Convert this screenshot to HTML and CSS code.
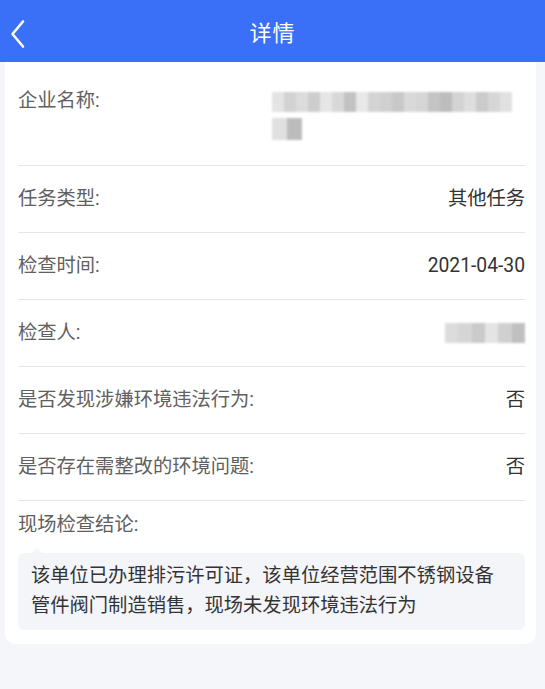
FILE: index.html
```html
<!DOCTYPE html>
<html lang="zh-CN">
<head>
<meta charset="utf-8">
<title>详情</title>
<link rel="stylesheet" href="styles.css">
</head>
<body>
<header class="topbar">
  <svg class="back" width="20" height="32" viewBox="0 0 20 32"><path d="M15 3.5 L4.5 16 L15 28.5" fill="none" stroke="#fff" stroke-width="2.6" stroke-linecap="round" stroke-linejoin="round"/></svg>
  <h1 class="title">详情</h1>
</header>
<main class="card">
  <div class="row row-top">
    <span class="label">企业名称:</span>
    <div class="mosaic-wrap">
      <div class="mosaic m1">
        <i style="background:#e4e4e4"></i><i style="background:#d2d2d2"></i><i style="background:#dcdcdc"></i><i style="background:#cdcdcd"></i><i style="background:#e6e6e6"></i><i style="background:#d8d8d8"></i><i style="background:#c2c2c2"></i><i style="background:#e8e8e8"></i><i style="background:#d4d4d4"></i><i style="background:#d0d0d0"></i><i style="background:#c8c8c8"></i><i style="background:#d9d9d9"></i><i style="background:#d6d6d6"></i><i style="background:#c4c4c4"></i><i style="background:#bdbdbd"></i><i style="background:#d3d3d3"></i><i style="background:#dedede"></i><i style="background:#cbcbcb"></i><i style="background:#d7d7d7"></i><i style="background:#e1e1e1"></i>
      </div>
      <div class="mosaic m2"><i style="background:#e0e0e0"></i><i style="background:#bcbcbc"></i></div>
    </div>
  </div>
  <div class="row">
    <span class="label">任务类型:</span>
    <span class="value">其他任务</span>
  </div>
  <div class="row">
    <span class="label">检查时间:</span>
    <span class="value">2021-04-30</span>
  </div>
  <div class="row">
    <span class="label">检查人:</span>
    <div class="mosaic m3"><i style="background:#dcdcdc"></i><i style="background:#d6d6d6"></i><i style="background:#cacaca"></i><i style="background:#e4e4e4"></i><i style="background:#d0d0d0"></i><i style="background:#c0c0c0"></i></div>
  </div>
  <div class="row">
    <span class="label">是否发现涉嫌环境违法行为:</span>
    <span class="value">否</span>
  </div>
  <div class="row">
    <span class="label">是否存在需整改的环境问题:</span>
    <span class="value">否</span>
  </div>
  <section class="conclusion">
    <span class="label">现场检查结论:</span>
    <p class="bubble">该单位已办理排污许可证，该单位经营范围不锈钢设备管件阀门制造销售，现场未发现环境违法行为</p>
  </section>
</main>
</body>
</html>
```

FILE: styles.css
```css
* { box-sizing: border-box; }
html, body { margin: 0; padding: 0; }
body {
  background: #f5f6fa;
  font-family: Roboto, "Noto Sans CJK SC", sans-serif;
  width: 545px;
  min-height: 689px;
}
.topbar {
  height: 62px;
  background: #3a6ff7;
  display: flex;
  align-items: center;
  justify-content: center;
  position: relative;
}
.back {
  position: absolute;
  left: 8px;
  top: 18px;
}
.title {
  margin: 0;
  color: #fff;
  font-size: 22px;
  font-weight: 400;
  letter-spacing: 1px;
}
.card {
  margin: 0 9px 0 5px;
  background: #fff;
  border-radius: 0 0 11px 11px;
  padding: 6px 11px 14px 13px;
}
.row {
  display: flex;
  justify-content: space-between;
  align-items: flex-start;
  padding: 20px 0 20px;
  border-bottom: 1px solid #e6e6e6;
  line-height: 26px;
  font-size: 19.3px;
}
.row-top { padding-bottom: 25px; }
.label {
  color: #606060;
  font-size: 19.3px;
  line-height: 26px;
}
.value {
  color: #333;
  font-size: 19.3px;
}
.mosaic-wrap {
  width: 253px;
  display: flex;
  flex-direction: column;
  gap: 6px;
  padding-top: 4px;
}
.mosaic {
  display: flex;
  filter: blur(1.2px);
}
.mosaic i { display: block; }
.m1 { height: 20px; width: 240px; }
.m1 i { flex: 1; }
.m2 { height: 22px; width: 30px; }
.m2 i { flex: 1; }
.m3 { height: 20px; width: 80px; margin-top: 3px; }
.m3 i { flex: 1; }
.conclusion {
  padding-top: 11px;
}
.conclusion .label { display: block; }
.bubble {
  position: relative;
  margin: 15px 0 0;
  background: #f4f5f9;
  border-radius: 6px;
  padding: 8px 20px 9px 13px;
  color: #333;
  font-size: 19.3px;
  line-height: 30px;
}
.bubble::before {
  content: "";
  position: absolute;
  left: 14px;
  top: -5px;
  border-left: 5px solid transparent;
  border-right: 5px solid transparent;
  border-bottom: 5px solid #f4f5f9;
}
```
